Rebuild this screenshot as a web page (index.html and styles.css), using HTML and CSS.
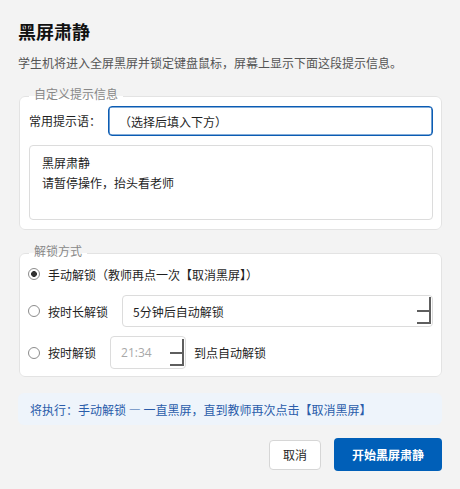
FILE: index.html
```html
<!DOCTYPE html>
<html lang="zh-CN">
<head>
<meta charset="utf-8">
<title>黑屏肃静</title>
<link rel="stylesheet" href="styles.css">
</head>
<body>
<div class="dialog">
  <h1 class="title">黑屏肃静</h1>
  <p class="desc">学生机将进入全屏黑屏并锁定键盘鼠标，屏幕上显示下面这段提示信息。</p>

  <fieldset class="group group-msg">
    <legend>自定义提示信息</legend>
    <div class="group-body">
      <div class="prompt-row">
        <span class="label">常用提示语：</span>
        <div class="input focused">（选择后填入下方）</div>
      </div>
      <div class="message">黑屏肃静<br>请暂停操作，抬头看老师</div>
    </div>
  </fieldset>

  <fieldset class="group group-unlock">
    <legend>解锁方式</legend>
    <div class="group-body">
      <div class="opt opt-manual">
        <span class="radio checked"></span>
        <span>手动解锁（教师再点一次【取消黑屏】）</span>
      </div>
      <div class="opt opt-duration">
        <span class="radio"></span>
        <span>按时长解锁</span>
        <div class="select">
          <span>5分钟后自动解锁</span>
          <span class="spin spin-select"></span>
        </div>
      </div>
      <div class="opt opt-time">
        <span class="radio"></span>
        <span>按时解锁</span>
        <div class="time">
          <span class="time-value">21:34</span>
          <span class="spin spin-time"></span>
        </div>
        <span class="time-after">到点自动解锁</span>
      </div>
    </div>
  </fieldset>

  <div class="info">将执行：手动解锁 — 一直黑屏，直到教师再次点击【取消黑屏】</div>

  <div class="actions">
    <button class="btn btn-cancel" type="button">取消</button>
    <button class="btn btn-primary" type="button">开始黑屏肃静</button>
  </div>
</div>
</body>
</html>
```

FILE: styles.css
```css
html, body {
  margin: 0;
  background: #f3f3f3;
}

body {
  font-family: "Noto Sans CJK SC", "Noto Sans", sans-serif;
  font-size: 12px;
  color: #1f1f1f;
}

.dialog {
  padding: 18px 18px 0 18px;
}

.title {
  margin: 0;
  font-size: 18px;
  line-height: 26px;
  font-weight: 700;
  color: #111;
}

.desc {
  margin: 10px 0 0;
  line-height: 18px;
  color: #555;
}

.group {
  margin: 14px 0 0 1px;
  padding: 0;
  border: 1px solid #e3e3e3;
  border-radius: 6px;
  background: #fff;
  min-width: 0;
}

.group legend {
  margin-left: 9px;
  padding: 0 5px 4px;
  line-height: 16px;
  font-size: 12px;
  color: #888;
}

.group-body {
  padding: 0 8px 9px 9px;
}

.prompt-row {
  display: flex;
  align-items: center;
  gap: 7px;
}

.label {
  line-height: 18px;
}

.input {
  flex: 1;
  height: 30px;
  box-sizing: border-box;
  border: 1px solid #0b5cb3;
  box-shadow: inset 0 0 0 0.6px #0b5cb3;
  border-radius: 4px;
  padding: 0 10px;
  display: flex;
  align-items: center;
  background: #fff;
}

.message {
  margin-top: 9px;
  height: 75px;
  box-sizing: border-box;
  border: 1px solid #dcdcdc;
  border-radius: 4px;
  padding: 7px 12px;
  line-height: 20px;
}

.group-unlock {
  margin-top: 13px;
}

.group-unlock .group-body {
  padding: 0 8px 7px 9px;
}

.opt {
  display: flex;
  align-items: center;
}

.opt-manual {
  height: 22px;
  margin-bottom: 10px;
}

.opt-duration {
  height: 32px;
  margin-bottom: 9px;
}

.opt-time {
  height: 33px;
}

.radio {
  flex: none;
  width: 12px;
  height: 12px;
  box-sizing: border-box;
  border-radius: 50%;
  border: 1px solid #8c8c8c;
  background: #fff;
  margin-left: -1px;
  margin-right: 8px;
}

.radio.checked {
  background: radial-gradient(circle, #333 0 2.6px, #fff 3.2px);
}

.select {
  flex: 1;
  margin-left: 14px;
  height: 32px;
  box-sizing: border-box;
  border: 1px solid #dcdcdc;
  border-radius: 4px;
  padding-left: 10px;
  display: flex;
  align-items: center;
  justify-content: space-between;
  background: #fff;
}

.time {
  margin-left: 14px;
  width: 76px;
  height: 33px;
  box-sizing: border-box;
  border: 1px solid #dcdcdc;
  border-radius: 4px;
  padding-left: 10px;
  display: flex;
  align-items: center;
  justify-content: space-between;
  background: #fff;
}

.time-value {
  font-family: "Open Sans", "Noto Sans", sans-serif;
  color: #a8a8a8;
}

.time-after {
  margin-left: 8px;
}

.spin {
  position: relative;
  align-self: flex-start;
  width: 14px;
  height: 27px;
  box-sizing: border-box;
  border-right: 2px solid #5e5e5e;
  border-bottom: 2px solid #5e5e5e;
  margin-right: 1px;
}

.spin::before {
  content: "";
  position: absolute;
  left: 0;
  right: 0;
  top: 13px;
  height: 2px;
  background: #5e5e5e;
}

.spin-select {
  margin-top: 1px;
}

.spin-time {
  margin-top: 2px;
}

.info {
  margin-top: 16px;
  height: 32px;
  box-sizing: border-box;
  border-radius: 6px;
  background: #eef4fb;
  color: #2a5caa;
  padding: 0 12px;
  display: flex;
  align-items: center;
}

.actions {
  display: flex;
  justify-content: flex-end;
  align-items: center;
  gap: 13px;
  margin-top: 13px;
}

.btn {
  font-family: inherit;
  font-size: 12px;
  border-radius: 4px;
  cursor: pointer;
}

.btn-cancel {
  height: 30px;
  padding: 0 13px;
  border: 1px solid #d6d6d6;
  background: #fff;
  color: #1f1f1f;
}

.btn-primary {
  height: 33px;
  padding: 0 18px;
  border: none;
  background: #005fb8;
  color: #fff;
  font-weight: 700;
}
```
